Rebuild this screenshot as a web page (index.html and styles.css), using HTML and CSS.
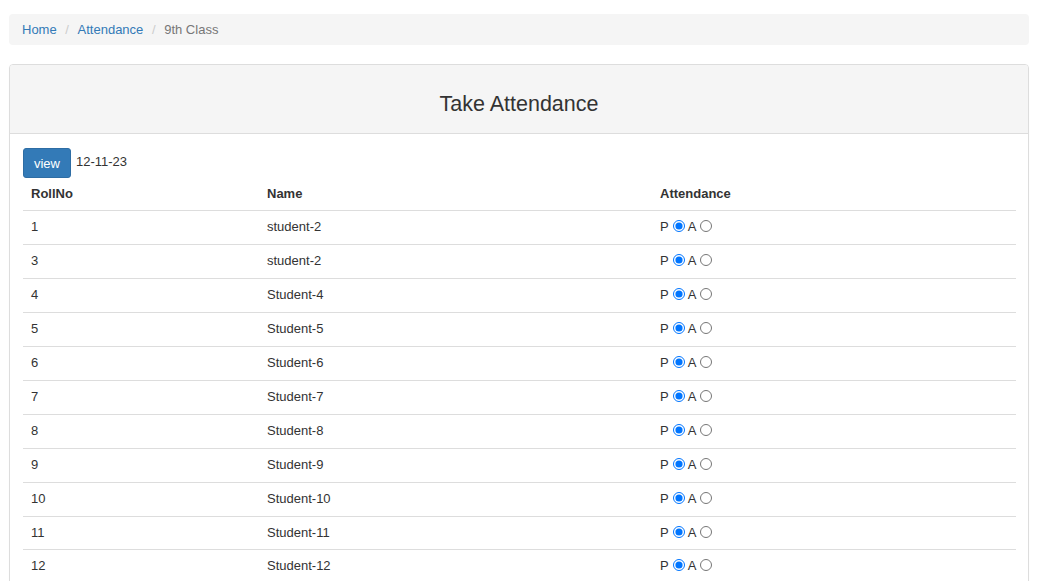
FILE: index.html
```html
<!DOCTYPE html>
<html>
<head>
<meta charset="utf-8">
<link rel="stylesheet" href="styles.css">
</head>
<body>
<div class="page">
  <ol class="breadcrumb">
    <li><a href="#">Home</a></li>
    <li><a href="#">Attendance</a></li>
    <li class="active">9th Class</li>
  </ol>
  <div class="panel">
    <div class="panel-heading">
      <h3 class="panel-title">Take Attendance</h3>
    </div>
    <div class="panel-body">
      <div class="toolbar"><button class="btn">view</button><span class="date">12-11-23</span></div>
      <table class="table">
        <thead>
          <tr><th class="c1">RollNo</th><th class="c2">Name</th><th class="c3">Attendance</th></tr>
        </thead>
        <tbody>
          <tr><td>1</td><td>student-2</td><td>P<input type="radio" name="r1" checked>A<input type="radio" name="r1"></td></tr>
          <tr><td>3</td><td>student-2</td><td>P<input type="radio" name="r3" checked>A<input type="radio" name="r3"></td></tr>
          <tr><td>4</td><td>Student-4</td><td>P<input type="radio" name="r4" checked>A<input type="radio" name="r4"></td></tr>
          <tr><td>5</td><td>Student-5</td><td>P<input type="radio" name="r5" checked>A<input type="radio" name="r5"></td></tr>
          <tr><td>6</td><td>Student-6</td><td>P<input type="radio" name="r6" checked>A<input type="radio" name="r6"></td></tr>
          <tr><td>7</td><td>Student-7</td><td>P<input type="radio" name="r7" checked>A<input type="radio" name="r7"></td></tr>
          <tr><td>8</td><td>Student-8</td><td>P<input type="radio" name="r8" checked>A<input type="radio" name="r8"></td></tr>
          <tr><td>9</td><td>Student-9</td><td>P<input type="radio" name="r9" checked>A<input type="radio" name="r9"></td></tr>
          <tr><td>10</td><td>Student-10</td><td>P<input type="radio" name="r10" checked>A<input type="radio" name="r10"></td></tr>
          <tr><td>11</td><td>Student-11</td><td>P<input type="radio" name="r11" checked>A<input type="radio" name="r11"></td></tr>
          <tr><td>12</td><td>Student-12</td><td>P<input type="radio" name="r12" checked>A<input type="radio" name="r12"></td></tr>
          <tr><td>13</td><td>Student-13</td><td>P<input type="radio" name="r13" checked>A<input type="radio" name="r13"></td></tr>
          <tr><td>14</td><td>Student-14</td><td>P<input type="radio" name="r14" checked>A<input type="radio" name="r14"></td></tr>
        </tbody>
      </table>
    </div>
  </div>
</div>
</body>
</html>
```
FILE: styles.css
```css
html, body {
  margin: 0;
  padding: 0;
  background: #fff;
}
body {
  font-family: "Liberation Sans", Arial, Helvetica, sans-serif;
  font-size: 13px;
  color: #333;
  overflow: hidden;
}
.page {
  width: 1020px;
  padding: 14px 0 0 9px;
}
.breadcrumb {
  list-style: none;
  margin: 0 0 19px;
  padding: 8px 13px 7px;
  line-height: 16px;
  height: 16px;
  box-sizing: content-box;
  background: #f5f5f5;
  border-radius: 4px;
}
.breadcrumb li {
  display: inline-block;
  line-height: 16px;
  vertical-align: top;
}
.breadcrumb li + li::before {
  content: "/\00a0";
  padding: 0 5px;
  color: #ccc;
}
.breadcrumb a {
  color: #337ab7;
  text-decoration: none;
}
.breadcrumb .active {
  color: #777;
}
.panel {
  border: 1px solid #ddd;
  border-radius: 4px;
  box-shadow: 0 1px 1px rgba(0,0,0,.05);
}
.panel-heading {
  background: #f5f5f5;
  border-bottom: 1px solid #ddd;
  border-radius: 3px 3px 0 0;
  padding: 27px 15px 17px;
}
.panel-title {
  margin: 0;
  font-size: 21.5px;
  font-weight: normal;
  line-height: 24px;
  text-align: center;
}
.panel-body {
  padding: 14px 13px 15px;
}
.toolbar {
  display: flex;
  align-items: center;
  height: 30px;
}
.btn {
  width: 48px;
  height: 30px;
  padding: 0;
  font: 13px "Liberation Sans", Arial, sans-serif;
  color: #fff;
  background: #337ab7;
  border: 1px solid #2e6da4;
  border-radius: 3px;
}
.date {
  margin-left: 5px;
  line-height: 16px;
  margin-top: -2px;
}
.table {
  width: 993px;
  border-collapse: collapse;
}
.table th, .table td {
  padding: 8px 8px;
  line-height: 16.9px;
  text-align: left;
  vertical-align: top;
}
.table th {
  line-height: 16.4px;
  font-weight: bold;
  border-bottom: 1px solid #ddd;
}
.table td {
  border-top: 1px solid #ddd;
}
.c1 { width: 220px; }
.c2 { width: 377px; }
.table input[type=radio] {
  width: 12px;
  height: 12px;
  margin: 0 3px 0 4px;
  vertical-align: -1px;
}
```
